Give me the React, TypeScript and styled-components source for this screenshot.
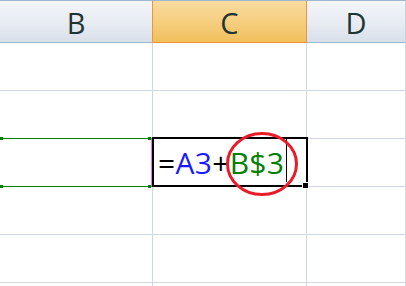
import React from 'react';
import styled, { createGlobalStyle } from 'styled-components';

const Global = createGlobalStyle`
  html, body { margin: 0; padding: 0; background: #fff; overflow: hidden; }
  body { font-family: "Open Sans", "Liberation Sans", sans-serif; }
`;

const Sheet = styled.div`
  display: grid;
  grid-template-columns: 153px 154px 99px;
  grid-template-rows: 43px;
  grid-auto-rows: 48px;
  width: 406px;
  height: 286px;
  overflow: hidden;
`;

const HeaderCell = styled.div<{ $active?: boolean; $orangeEdge?: boolean }>`
  box-sizing: border-box;
  display: flex;
  align-items: center;
  justify-content: center;
  padding-top: 1px;
  border-top: 1px solid #9eb6ce;
  border-bottom: 1px solid ${(p) => (p.$active ? '#f29536' : '#9eb6ce')};
  border-right: 1px solid ${(p) => (p.$orangeEdge ? '#f29536' : '#c5d2df')};
  background: ${(p) =>
    p.$active
      ? 'linear-gradient(to bottom, #f9dba0 0%, #f5cd7c 55%, #f1c05c 100%)'
      : 'linear-gradient(to bottom, #f3f5f9 0%, #e7ebf2 55%, #d9e0ea 100%)'};
  font-size: 29px;
  color: #1f3533;
`;

const Cell = styled.div`
  box-sizing: border-box;
  position: relative;
  border-right: 1px solid #d0d7e5;
  border-bottom: 1px solid #d0d7e5;
`;

const RangeMark = styled.div`
  position: absolute;
  left: 0;
  right: 0;
  top: -1px;
  bottom: -1px;
  border-top: 1px solid #008000;
  border-bottom: 1px solid #008000;
  border-right: 1px solid #f070f0;
`;

const Handle = styled.span<{ $side: 'l' | 'r'; $pos: 't' | 'b' }>`
  position: absolute;
  width: 3px;
  height: 3px;
  background: #008000;
  ${(p) => (p.$side === 'l' ? 'left: 0;' : 'right: 0;')}
  ${(p) => (p.$pos === 't' ? 'top: -2px;' : 'bottom: -2px;')}
`;

const EditBox = styled.div`
  position: absolute;
  left: -1px;
  top: -2px;
  right: -2px;
  bottom: -1px;
  border: 2px solid #000;
  display: flex;
  align-items: center;
  padding-left: 4px;
  padding-top: 1px;
  font-size: 30px;
  letter-spacing: 0.3px;
  line-height: 1;
  color: #000;
  z-index: 1;
`;

const Part = styled.span<{ $color?: string }>`
  color: ${(p) => p.$color || '#000'};
  white-space: pre;
`;

const Caret = styled.span`
  align-self: flex-start;
  width: 1px;
  height: 43px;
  margin-left: 2px;
  margin-top: -1px;
  background: #000;
`;

const FillHandle = styled.span`
  position: absolute;
  right: -3px;
  bottom: -4px;
  width: 7px;
  height: 7px;
  box-sizing: border-box;
  background: #000;
  border: 1px solid #fff;
`;

const Circle = styled.svg`
  position: absolute;
  left: 71px;
  top: -8px;
  width: 76px;
  height: 68px;
  z-index: 2;
  overflow: visible;
`;

const columns = ['B', 'C', 'D'];
const ROWS = 6;

export default function App() {
  return (
    <>
      <Global />
      <Sheet>
        {columns.map((c) => (
          <HeaderCell key={c} $active={c === 'C'} $orangeEdge={c !== 'D'}>
            {c}
          </HeaderCell>
        ))}
        {Array.from({ length: ROWS }).map((_, r) =>
          columns.map((c) => {
            if (r === 2 && c === 'B') {
              return (
                <Cell key={c + r}>
                  <RangeMark>
                    <Handle $side="l" $pos="t" />
                    <Handle $side="r" $pos="t" />
                    <Handle $side="l" $pos="b" />
                    <Handle $side="r" $pos="b" />
                  </RangeMark>
                </Cell>
              );
            }
            if (r === 2 && c === 'C') {
              return (
                <Cell key={c + r}>
                  <EditBox>
                    <Part>=</Part>
                    <Part $color="#1a1aff">A3</Part>
                    <Part>+</Part>
                    <Part $color="#008000">B$3</Part>
                    <Caret />
                    <FillHandle />
                  </EditBox>
                  <Circle viewBox="0 0 76 68">
                    <ellipse cx="38" cy="33" rx="34.5" ry="30.5" fill="none" stroke="#e81c2a" strokeWidth="3" />
                  </Circle>
                </Cell>
              );
            }
            return <Cell key={c + r} />;
          })
        )}
      </Sheet>
    </>
  );
}
